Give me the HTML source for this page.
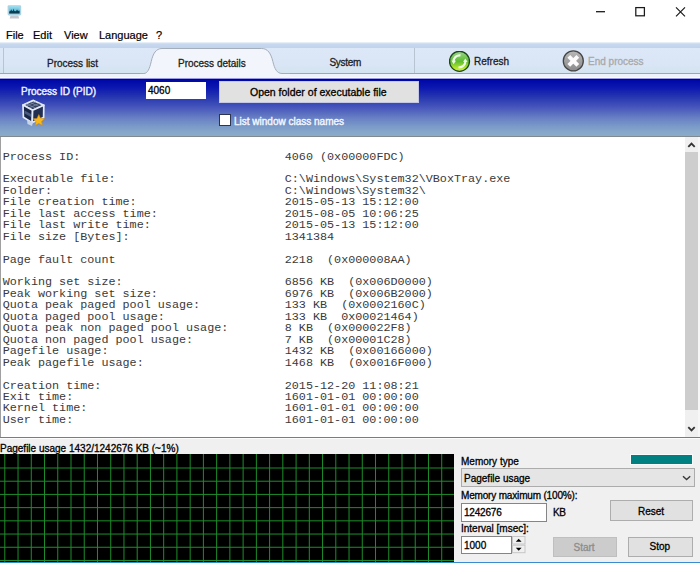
<!DOCTYPE html>
<html><head><meta charset="utf-8">
<style>
html,body{margin:0;padding:0;}
body{width:700px;height:563px;position:relative;overflow:hidden;background:#fff;font-family:"Liberation Sans",sans-serif;font-size:11px;color:#000;}
.a{position:absolute;}
.t{position:absolute;white-space:pre;line-height:1;-webkit-text-stroke:0.3px currentColor;}
#menu span{position:absolute;top:28.5px;font-size:11px;color:#000;-webkit-text-stroke:0.2px currentColor;}
#tabbar{left:0;top:43px;width:700px;height:35px;background:linear-gradient(#dce8f8 5px,#dae6f6 20px,#d4e4f0 30px);}
#band{left:0;top:42px;width:700px;height:6px;background:linear-gradient(#e6eef8 0,#e6eef8 1px,#d2deee 1px,#d2deee 2px,#c8d8ee 2px,#c4d6ee 4px,#c0d2ec 6px);}
#tabline{left:0;top:73px;width:700px;height:1px;background:#9ca6b6;}
#tabbelow{left:0;top:74px;width:700px;height:4px;background:linear-gradient(#eef3fb 0,#eef3fb 3px,#fafcff 3px,#fafcff 4px);}
#blue{left:0;top:78px;width:700px;height:58px;background:linear-gradient(#9a9ae4 0,#9a9ae4 1px,#000088 1px,#000088 2px,#0008a8 2px,#0c18b0 10px,#2636b0 19px,#4858bc 30px,#6880c4 40px,#7c9cc8 49px,#86a6ca 54px,#8aaac8 57px,#8aaac8 58px);}
#blueline{left:0;top:136px;width:700px;height:1px;background:#808890;}
#text{left:0;top:137px;width:700px;height:300px;background:#fff;}
#textborder{left:0;top:137px;width:1px;height:300px;background:#a0a0a0;}
#textbottom{left:0;top:437px;width:700px;height:1px;background:#7c7c7c;}
#textbottom2{left:0;top:438px;width:700px;height:1px;background:#fcfcfc;}
#mono{left:2.7px;top:151.5px;font-family:"Liberation Mono",monospace;font-size:11.76px;line-height:11.45px;color:#3a3a3a;white-space:pre;}
#sb{left:685px;top:137px;width:13px;height:300px;background:#f0f0f0;}
#sbr{left:698px;top:137px;width:2px;height:300px;background:#f7f7f7;}
#thumb{left:685px;top:152px;width:13px;height:258px;background:#cdcdcd;}
#bottom{left:0;top:439px;width:700px;height:124px;background:#f0f0f0;}
#graph{left:0;top:454px;width:454px;height:108px;background:#000;}
#bluebottom{left:0;top:562px;width:700px;height:1px;background:#3a8cd0;}
.btn{position:absolute;background:#e1e1e1;border:1px solid #adadad;box-sizing:border-box;text-align:center;font-size:11px;color:#000;}
.edit{position:absolute;background:#fff;border:1px solid #858585;box-sizing:border-box;font-size:11px;color:#000;}
</style></head><body>
<!-- title bar -->
<svg class="a" style="left:0px;top:0px" width="30" height="24" viewBox="0 0 30 24">
 <defs><linearGradient id="scr" x1="0" y1="0" x2="0" y2="1"><stop offset="0" stop-color="#9ee0f0"/><stop offset="1" stop-color="#3aa6c6"/></linearGradient></defs>
 <path d="M7.6 6.5 Q7.6 5.2 9 5.2 L19.8 5.2 Q21.2 5.2 21.2 6.5 L21.2 14 Q21.2 15.4 19.8 15.4 L9 15.4 Q7.6 15.4 7.6 14 Z" fill="#a9d2e2"/>
 <rect x="9.2" y="6.2" width="10.4" height="7.2" fill="url(#scr)"/>
 <path d="M9.2 13.4 L9.2 11.5 L10.5 11 L11.2 9.2 L12 11 L13 10.8 L13.6 8.6 L14.3 11 L16 11.2 L17 9.6 L18 11 L19.6 10.6 L19.6 13.4 Z" fill="#0c3c52"/>
 <path d="M10.5 15.4 L18.3 15.4 L19.2 18.5 L9.6 18.5 Z" fill="#c4c8d0"/>
</svg>
<svg class="a" style="left:590px;top:0px" width="110" height="22" viewBox="590 0 110 22">
 <path d="M596 11.7 L605 11.7" stroke="#1a1a1a" stroke-width="1.3"/>
 <rect x="635.8" y="7.6" width="8.6" height="8.2" fill="none" stroke="#1a1a1a" stroke-width="1.25"/>
 <path d="M676 7.3 L685 16.3 M685 7.3 L676 16.3" stroke="#1a1a1a" stroke-width="1.15"/>
</svg>


<!-- menu -->
<div id="menu">
<span style="left:6px">File</span>
<span style="left:33px">Edit</span>
<span style="left:64px">View</span>
<span style="left:99px">Language</span>
<span style="left:156px">?</span>
</div>
<!-- tab bar -->
<div id="tabbar" class="a"></div>
<div id="band" class="a"></div>
<div id="tabline" class="a"></div>
<div id="tabbelow" class="a"></div>
<div class="a" style="left:3px;top:48px;width:1px;height:25px;background:#b8c4d2"></div>
<div class="a" style="left:414px;top:48px;width:1px;height:25px;background:#b8c4d2"></div>
<svg class="a" style="left:140px;top:48px" width="150" height="30" viewBox="0 0 150 30">
 <path d="M3.8 25.5 C7.5 25.5 9.5 21 11.2 13.6 C13 5.5 16 0.5 22 0.5 L121.7 0.5 C127.7 0.5 131 5.5 132.9 13.6 C134.6 21 137 25.5 142 25.5 L150 25.5 L150 30 L0 30 L0 25.5 Z" fill="#f2f6fc"/>
 <path d="M0 25.5 L3.8 25.5 C7.5 25.5 9.5 21 11.2 13.6 C13 5.5 16 0.5 22 0.5 L121.7 0.5 C127.7 0.5 131 5.5 132.9 13.6 C134.6 21 137 25.5 142 25.5 L150 25.5" fill="none" stroke="#a4aebb" stroke-width="1"/>
</svg>
<div class="t" style="left:47px;top:58.5px;font-size:10px;color:#1e1e1e">Process list</div>
<div class="t" style="left:178px;top:58.5px;font-size:10px;color:#1e1e1e">Process details</div>
<div class="t" style="left:329.5px;top:58px;font-size:10px;letter-spacing:-0.3px;color:#1e1e1e">System</div>
<svg class="a" style="left:449px;top:51px" width="22" height="22" viewBox="0 0 22 22">
 <defs><linearGradient id="rg" x1="0" y1="0" x2="0" y2="1"><stop offset="0" stop-color="#9cd890"/><stop offset="0.5" stop-color="#5cbc2e"/><stop offset="0.85" stop-color="#b8e82c"/><stop offset="1" stop-color="#d0f040"/></linearGradient></defs>
 <circle cx="10.5" cy="10.3" r="10" fill="url(#rg)" stroke="#1c461c" stroke-width="1.3"/>
 <path d="M11.5 4.4 A6 6 0 0 0 4.6 10.8" fill="none" stroke="#f0fae8" stroke-width="2.2"/>
 <path d="M2.4 9.6 L4.6 13.2 L7 9.8 Z" fill="#f0fae8"/>
 <path d="M16.4 9.8 A6 6 0 0 1 9.5 16.2" fill="none" stroke="#f0fae8" stroke-width="2.2"/>
 <path d="M14 10.8 L16.4 7.4 L18.6 11 Z" fill="#f0fae8"/>
</svg>
<div class="t" style="left:474px;top:57px;font-size:10px;color:#1e1e1e">Refresh</div>
<svg class="a" style="left:562px;top:50px" width="24" height="24" viewBox="0 0 24 24">
 <defs><linearGradient id="gg" x1="0" y1="0" x2="0" y2="1"><stop offset="0" stop-color="#b8b8b8"/><stop offset="1" stop-color="#8a8a8a"/></linearGradient></defs>
 <circle cx="11.3" cy="10.9" r="10" fill="url(#gg)" stroke="#454545" stroke-width="1.3"/>
 <path d="M6.8 6.4 L15.8 15.4 M15.8 6.4 L6.8 15.4" stroke="#fbfbfb" stroke-width="4" stroke-linecap="butt"/>
</svg>
<div class="t" style="left:588px;top:57px;font-size:10px;color:#a9a9a9">End process</div>
<!-- blue panel -->
<div id="blue" class="a"></div>
<div id="blueline" class="a"></div>
<div class="t" style="left:21px;top:87px;font-size:10px;color:#eef2ff;-webkit-text-stroke:0.4px #eef2ff">Process ID (PID)</div>
<svg class="a" style="left:18px;top:96px" width="32" height="34" viewBox="18 96 32 34">
 <path d="M23 105 L33.4 100.4 L43.8 105.2 L32.6 110.2 Z" fill="#34405e" stroke="#e2eaf8" stroke-width="1.7" stroke-linejoin="round"/>
 <path d="M26.5 104 L36.5 108.5 M30 102.4 L40.3 107 M29.5 107.7 L39.6 103.2 M26 106.2 L36 101.8" stroke="#8090b0" stroke-width="0.7"/>
 <path d="M23 105 L32.6 110.2 L32.2 122.6 L23.4 117.2 Z" fill="#1a2646" stroke="#e2eaf8" stroke-width="1.7" stroke-linejoin="round"/>
 <path d="M24.5 110.5 L31 114 L31 117 L24.5 113.5 Z" fill="#4a5a80"/>
 <path d="M32.6 110.2 L43.8 105.2 L43.6 117.4 L32.2 122.6 Z" fill="#222e52" stroke="#e2eaf8" stroke-width="1.7" stroke-linejoin="round"/>
 <path d="M27 120 L27.5 124 L32 126 L33 122 Z" fill="#c8d4e8"/>
 <path d="M38.8 114.6 L40.6 118.4 L44.6 118.8 L41.6 121.5 L42.5 125.5 L38.8 123.4 L35.1 125.5 L36 121.5 L33 118.8 L37 118.4 Z" fill="#f7b818" stroke="#d08a10" stroke-width="0.6" stroke-linejoin="round"/>
</svg>
<div class="edit" style="left:146px;top:82px;width:60px;height:17px;border:none"></div>
<div class="t" style="left:148px;top:85.5px;font-size:10px;color:#000">4060</div>
<div class="btn" style="left:219px;top:81px;width:200px;height:22px;border-color:#c4c8e6;"></div>
<div class="t" style="left:250px;top:87px;font-size:10.5px;color:#000">Open folder of executable file</div>
<div class="a" style="left:219px;top:114px;width:12px;height:12px;background:#fff;border:1px solid #2c3450;box-sizing:border-box"></div>
<div class="t" style="left:234px;top:116.5px;font-size:10px;color:#f2f6ff;-webkit-text-stroke:0.4px #f2f6ff">List window class names</div>
<!-- text area -->
<div id="text" class="a"></div>
<div id="textborder" class="a"></div>
<div id="mono" class="a">Process ID:                             4060 (0x00000FDC)

Executable file:                        C:\Windows\System32\VBoxTray.exe
Folder:                                 C:\Windows\System32\
File creation time:                     2015-05-13 15:12:00
File last access time:                  2015-08-05 10:06:25
File last write time:                   2015-05-13 15:12:00
File size [Bytes]:                      1341384

Page fault count                        2218  (0x000008AA)

Working set size:                       6856 KB  (0x006D0000)
Peak working set size:                  6976 KB  (0x006B2000)
Quota peak paged pool usage:            133 KB  (0x0002160C)
Quota paged pool usage:                 133 KB  0x00021464)
Quota peak non paged pool usage:        8 KB  (0x000022F8)
Quota non paged pool usage:             7 KB  (0x00001C28)
Pagefile usage:                         1432 KB  (0x00166000)
Peak pagefile usage:                    1468 KB  (0x0016F000)

Creation time:                          2015-12-20 11:08:21
Exit time:                              1601-01-01 00:00:00
Kernel time:                            1601-01-01 00:00:00
User time:                              1601-01-01 00:00:00</div>
<div id="sb" class="a"></div><div id="sbr" class="a"></div>
<div id="thumb" class="a"></div>
<svg class="a" style="left:686px;top:141px" width="11" height="8" viewBox="0 0 11 8"><path d="M2.3 5.9 L5.5 2.6 L8.7 5.9" fill="none" stroke="#333" stroke-width="1.8"/></svg>
<svg class="a" style="left:686px;top:425px" width="11" height="8" viewBox="0 0 11 8"><path d="M2.3 2.1 L5.5 5.4 L8.7 2.1" fill="none" stroke="#333" stroke-width="1.8"/></svg>
<div id="textbottom" class="a"></div><div id="textbottom2" class="a"></div>
<!-- bottom -->
<div id="bottom" class="a"></div>
<div class="t" style="left:0px;top:444px;font-size:10px;color:#000">Pagefile usage 1432/1242676 KB (~1%)</div>
<svg id="graph" class="a" width="454" height="108" viewBox="0 0 454 108" style="left:0;top:454px">
 <rect width="454" height="108" fill="#000"/>
 <g id="grid" stroke="#1d8e2a" stroke-width="1"><line x1="4.80" y1="0" x2="4.80" y2="108"/><line x1="18.04" y1="0" x2="18.04" y2="108"/><line x1="31.28" y1="0" x2="31.28" y2="108"/><line x1="44.52" y1="0" x2="44.52" y2="108"/><line x1="57.76" y1="0" x2="57.76" y2="108"/><line x1="71.00" y1="0" x2="71.00" y2="108"/><line x1="84.24" y1="0" x2="84.24" y2="108"/><line x1="97.48" y1="0" x2="97.48" y2="108"/><line x1="110.72" y1="0" x2="110.72" y2="108"/><line x1="123.96" y1="0" x2="123.96" y2="108"/><line x1="137.20" y1="0" x2="137.20" y2="108"/><line x1="150.44" y1="0" x2="150.44" y2="108"/><line x1="163.68" y1="0" x2="163.68" y2="108"/><line x1="176.92" y1="0" x2="176.92" y2="108"/><line x1="190.16" y1="0" x2="190.16" y2="108"/><line x1="203.40" y1="0" x2="203.40" y2="108"/><line x1="216.64" y1="0" x2="216.64" y2="108"/><line x1="229.88" y1="0" x2="229.88" y2="108"/><line x1="243.12" y1="0" x2="243.12" y2="108"/><line x1="256.36" y1="0" x2="256.36" y2="108"/><line x1="269.60" y1="0" x2="269.60" y2="108"/><line x1="282.84" y1="0" x2="282.84" y2="108"/><line x1="296.08" y1="0" x2="296.08" y2="108"/><line x1="309.32" y1="0" x2="309.32" y2="108"/><line x1="322.56" y1="0" x2="322.56" y2="108"/><line x1="335.80" y1="0" x2="335.80" y2="108"/><line x1="349.04" y1="0" x2="349.04" y2="108"/><line x1="362.28" y1="0" x2="362.28" y2="108"/><line x1="375.52" y1="0" x2="375.52" y2="108"/><line x1="388.76" y1="0" x2="388.76" y2="108"/><line x1="402.00" y1="0" x2="402.00" y2="108"/><line x1="415.24" y1="0" x2="415.24" y2="108"/><line x1="428.48" y1="0" x2="428.48" y2="108"/><line x1="441.72" y1="0" x2="441.72" y2="108"/><line x1="0" y1="14.00" x2="454" y2="14.00"/><line x1="0" y1="27.21" x2="454" y2="27.21"/><line x1="0" y1="40.42" x2="454" y2="40.42"/><line x1="0" y1="53.63" x2="454" y2="53.63"/><line x1="0" y1="66.84" x2="454" y2="66.84"/><line x1="0" y1="80.05" x2="454" y2="80.05"/><line x1="0" y1="93.26" x2="454" y2="93.26"/><line x1="0" y1="106.47" x2="454" y2="106.47"/></g>
</svg>
<div class="t" style="left:461px;top:457px;font-size:10px;color:#000">Memory type</div>
<div class="a" style="left:630px;top:454px;width:63px;height:11px;background:#008080;border:1px solid #f8fcfc;box-sizing:border-box"></div>
<div class="a" style="left:461px;top:468px;width:234px;height:19px;background:#e5e5e5;border:1px solid #acacac;box-sizing:border-box"></div>
<div class="t" style="left:464px;top:474px;font-size:10px;color:#000">Pagefile usage</div>
<svg class="a" style="left:682px;top:475px" width="10" height="7" viewBox="0 0 10 7"><path d="M1 1.2 L4.6 4.6 L8.2 1.2" fill="none" stroke="#3a3a3a" stroke-width="1.4"/></svg>
<div class="t" style="left:461px;top:490.5px;font-size:10px;letter-spacing:-0.17px;color:#000">Memory maximum (100%):</div>
<div class="edit" style="left:461px;top:503px;width:86px;height:19px;"></div>
<div class="t" style="left:464px;top:507.5px;font-size:10px;letter-spacing:-0.2px;color:#000">1242676</div>
<div class="t" style="left:553px;top:507.5px;font-size:10px;letter-spacing:-0.3px;color:#000">KB</div>
<div class="btn" style="left:610px;top:500px;width:83px;height:21px;"></div>
<div class="t" style="left:638px;top:506.5px;font-size:10px;color:#000">Reset</div>
<div class="t" style="left:461px;top:524px;font-size:10px;color:#000">Interval [msec]:</div>
<div class="edit" style="left:461px;top:536px;width:51px;height:18px;"></div>
<div class="t" style="left:464px;top:540.5px;font-size:10px;color:#000">1000</div>
<svg class="a" style="left:512px;top:536px" width="14" height="18" viewBox="0 0 14 18">
 <rect x="0.5" y="0.5" width="12.5" height="7.5" fill="#f0f0f0" stroke="#c6c6c6"/>
 <rect x="0.5" y="9.2" width="12.5" height="7.5" fill="#f0f0f0" stroke="#c6c6c6"/>
 <path d="M3.8 5.8 L6.7 2.8 L9.6 5.8 Z" fill="#000"/>
 <path d="M3.8 11.8 L6.7 14.8 L9.6 11.8 Z" fill="#000"/>
</svg>

<div class="btn" style="left:553px;top:537px;width:64px;height:20px;background:#cccccc;border-color:#bfbfbf"></div>
<div class="t" style="left:573.5px;top:542.5px;font-size:10px;color:#8c8c8c">Start</div>
<div class="btn" style="left:628px;top:537px;width:65px;height:20px;"></div>
<div class="t" style="left:649.5px;top:542px;font-size:10px;color:#000">Stop</div>
<div id="bluebottom" class="a"></div>
</body></html>
